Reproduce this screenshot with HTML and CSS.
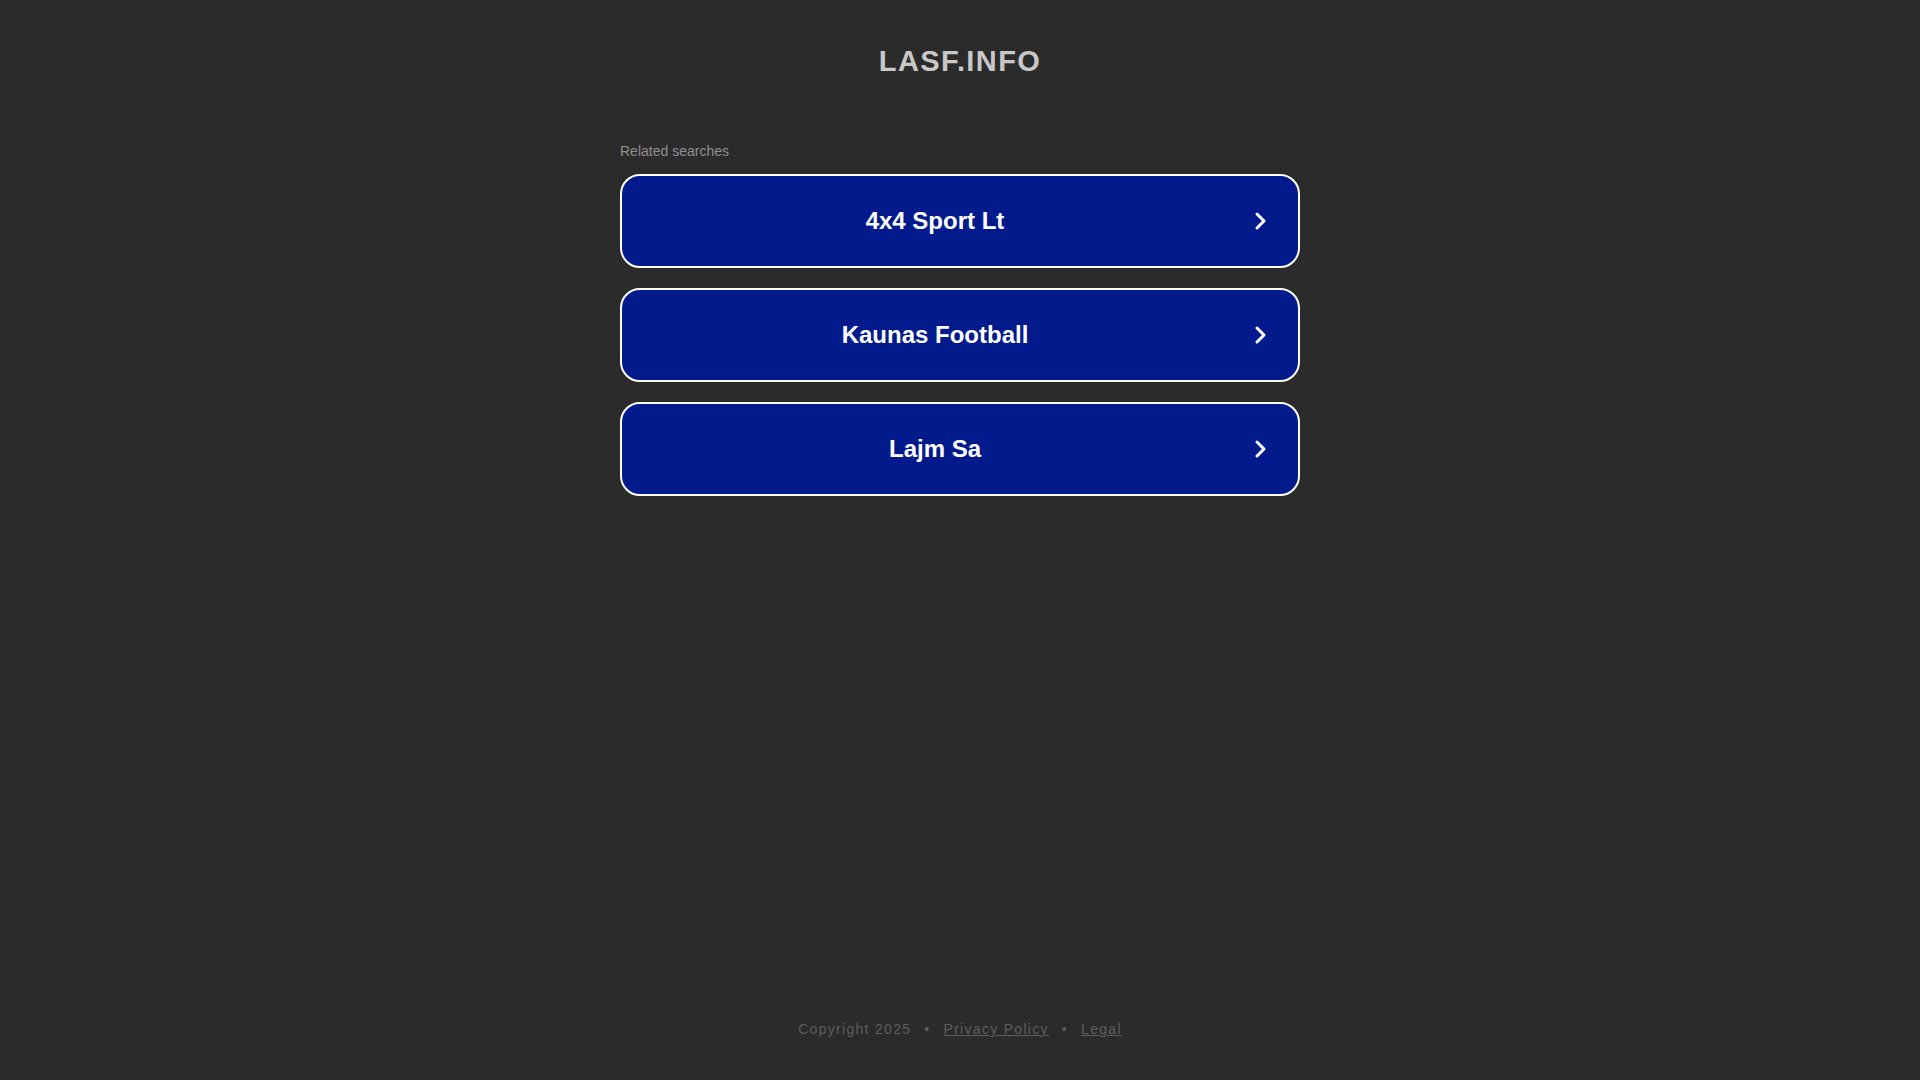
FILE: index.html
```html
<!DOCTYPE html>
<html lang="en">
<head>
<meta charset="utf-8">
<title>lasf.info</title>
<link rel="stylesheet" href="styles.css">
</head>
<body>
<div class="page">
  <header class="header">
    <h1 class="title">LASF.INFO</h1>
  </header>
  <main class="main">
    <div class="related">Related searches</div>
    <div class="list">
      <a class="btn" href="#"><span class="btn-text">4x4 Sport Lt</span><svg class="chev" viewBox="0 0 16 20" width="16" height="20"><path d="M5 3 L12 10 L5 17" fill="none" stroke="#fff" stroke-width="3" stroke-linecap="round" stroke-linejoin="round"/></svg></a>
      <a class="btn" href="#"><span class="btn-text">Kaunas Football</span><svg class="chev" viewBox="0 0 16 20" width="16" height="20"><path d="M5 3 L12 10 L5 17" fill="none" stroke="#fff" stroke-width="3" stroke-linecap="round" stroke-linejoin="round"/></svg></a>
      <a class="btn" href="#"><span class="btn-text">Lajm Sa</span><svg class="chev" viewBox="0 0 16 20" width="16" height="20"><path d="M5 3 L12 10 L5 17" fill="none" stroke="#fff" stroke-width="3" stroke-linecap="round" stroke-linejoin="round"/></svg></a>
    </div>
  </main>
  <footer class="footer">
    <span>Copyright 2025</span><span class="dot">•</span><a href="#">Privacy Policy</a><span class="dot">•</span><a href="#">Legal</a>
  </footer>
</div>
</body>
</html>
```
FILE: styles.css
```css
html, body {
  margin: 0;
  padding: 0;
  height: 100%;
}
body {
  background: #2b2b2b;
  font-family: "Liberation Sans", Arial, sans-serif;
}
.page {
  height: 1080px;
  display: flex;
  flex-direction: column;
  align-items: center;
}
.header {
  padding-top: 43px;
}
.title {
  margin: 0;
  font-size: 29px;
  line-height: 36px;
  font-weight: bold;
  letter-spacing: 1.4px;
  color: #c8c8c8;
}
.main {
  width: 680px;
  margin-top: 64px;
  flex: 1;
}
.related {
  font-size: 14px;
  line-height: 16px;
  color: #909090;
  margin-bottom: 15px;
}
.list {
  display: flex;
  flex-direction: column;
  gap: 20px;
}
.btn {
  height: 90px;
  display: flex;
  align-items: center;
  border: 2px solid #ffffff;
  border-radius: 20px;
  background: #021a8b;
  text-decoration: none;
  padding-right: 30px;
}
.btn-text {
  flex: 1;
  text-align: center;
  color: #ffffff;
  font-size: 24px;
  font-weight: bold;
  margin-right: 4px;
}
.chev {
  display: block;
  flex: none;
}
.footer {
  padding-bottom: 43px;
  font-size: 14px;
  letter-spacing: 1.3px;
  color: #5e5e5e;
  display: flex;
  align-items: center;
}
.footer a {
  color: #5e5e5e;
  text-decoration: underline;
}
.dot {
  margin: 0 13px;
}
```
